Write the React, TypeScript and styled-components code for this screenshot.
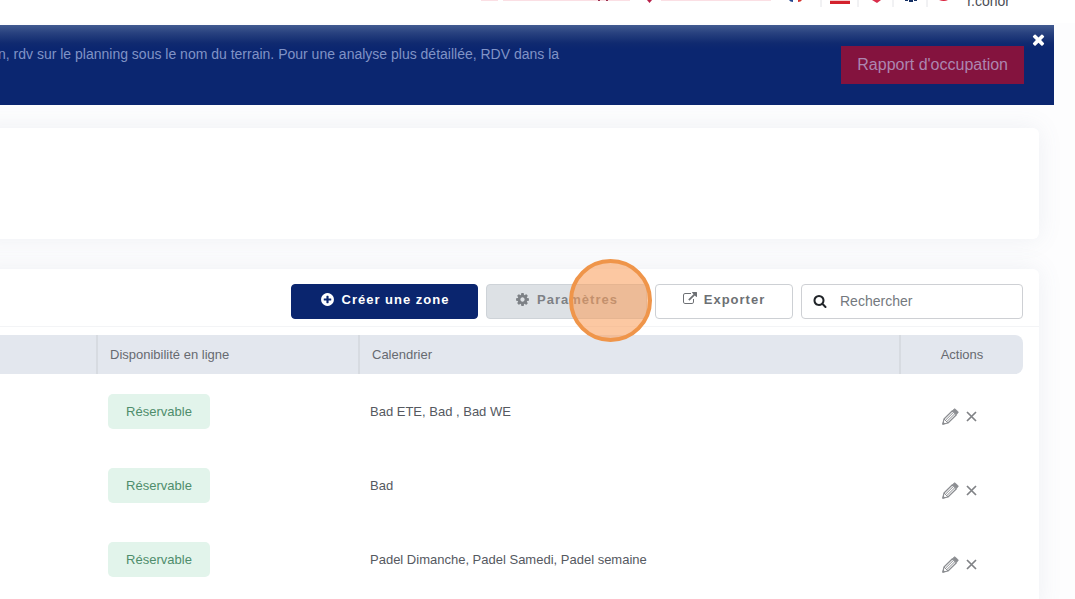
import React from "react";
import styled, { createGlobalStyle } from "styled-components";

const GlobalStyle = createGlobalStyle`
  * { box-sizing: border-box; }
  body {
    margin: 0;
    background: #fdfdfe;
    color: #55595f;
    font-family: "Liberation Sans", Arial, sans-serif;
    font-size: 13px;
    overflow: hidden;
  }
  button, input { font-family: inherit; }
`;

const TopBar = styled.header`
  display: flex;
  justify-content: flex-end;
  height: 23px;
  padding-right: 65px;
  background: #fff;
  overflow: hidden;
`;

const TopNotes = styled.div`
  display: flex;
  align-items: flex-start;
  width: 292px;
  margin-right: 16px;
`;

const TopIcons = styled.svg`
  display: block;
  width: 172px;
  height: 8px;
  margin-right: 7px;
`;

const UserName = styled.span`
  height: 16px;
  margin-top: -7px;
  color: #4a4d55;
  font-size: 14px;
  line-height: 16px;
`;

const Banner = styled.section`
  display: flex;
  align-items: flex-start;
  height: 80px;
  margin: 2px 21px 0 0;
  background: linear-gradient(#425b91 0, #28417f 8px, #102a70 18px, #0b2670 24px);
`;

const BannerText = styled.p`
  flex: 1;
  margin: 20px 0 0 -2px;
  color: #8093c6;
  font-size: 14px;
  line-height: 18px;
  white-space: nowrap;
`;

const ReportButton = styled.button`
  height: 38px;
  margin-top: 21px;
  padding: 0 16px;
  border: 0;
  background: #84133e;
  color: #ac86b0;
  font-size: 16px;
  line-height: 36px;
  white-space: nowrap;
`;

const IconButton = styled.button<{ $color: string }>`
  display: flex;
  padding: 0;
  border: 0;
  background: none;
  color: ${(p) => p.$color};
`;

const BannerClose = styled.div`
  margin: 6px 7px 0 6px;
`;

const Panel = styled.section`
  margin-right: 36px;
  margin-left: -24px;
  padding-left: 24px;
  border-radius: 6px;
  background: #fff;
  box-shadow: 0 0 24px rgba(100, 115, 150, 0.1);
`;

const EmptyPanel = styled(Panel)`
  height: 111px;
  margin-top: 23px;
`;

const ListPanel = styled(Panel)`
  min-height: 340px;
  margin-top: 30px;
`;

const Toolbar = styled.div`
  display: flex;
  justify-content: flex-end;
  gap: 8px;
  padding: 15px 16px 7px 0;
  border-bottom: 1px solid #f3f4f6;
`;

const ToolButton = styled.button<{ $kind: "primary" | "muted" | "plain"; $width: number }>`
  display: flex;
  align-items: center;
  justify-content: center;
  gap: 7px;
  width: ${(p) => p.$width}px;
  height: 35px;
  padding: 0 0 5px;
  border: 1px solid ${(p) => ({ primary: "#0a256e", muted: "#ced3d8", plain: "#cdd0d4" })[p.$kind]};
  border-radius: 4px;
  background: ${(p) => ({ primary: "#0a256e", muted: "#dde1e5", plain: "#fff" })[p.$kind]};
  color: ${(p) => ({ primary: "#fff", muted: "#7d8186", plain: "#6d7074" })[p.$kind]};
  font-size: 13px;
  font-weight: 700;
  letter-spacing: 1px;
`;

const Highlighted = styled.div`
  position: relative;
`;

const ClickMarker = styled.span`
  position: absolute;
  top: -25px;
  right: -5px;
  width: 83px;
  height: 83px;
  border: 4px solid #ef954a;
  border-radius: 50%;
  background: rgba(249, 157, 89, 0.56);
  pointer-events: none;
`;

const SearchBox = styled.label`
  display: flex;
  align-items: center;
  gap: 13px;
  width: 222px;
  height: 35px;
  padding: 0 0 2px 11px;
  border: 1px solid #ced0d4;
  border-radius: 4px;
  background: #fff;
  color: #212529;
`;

const SearchInput = styled.input`
  flex: 1;
  min-width: 0;
  padding: 0;
  border: 0;
  outline: 0;
  background: none;
  font-size: 14px;
  &::placeholder { color: #74797e; opacity: 1; }
`;

const TableArea = styled.div`
  padding: 8px 16px 0 0;
`;

const Table = styled.table`
  width: 100%;
  border-collapse: separate;
  border-spacing: 0;
  table-layout: fixed;
`;

const HeadCell = styled.th<{ $center?: boolean }>`
  height: 39px;
  padding: 0 12px;
  background: #e3e7ee;
  color: #676a70;
  font-weight: 400;
  text-align: ${(p) => (p.$center ? "center" : "left")};
  & + & { border-left: 2px solid #d7dbe1; }
  &:last-child { border-radius: 0 8px 8px 0; }
`;

const Cell = styled.td`
  height: 74px;
  padding: 0 12px;
  vertical-align: middle;
`;

const Badge = styled.span`
  display: inline-block;
  width: 102px;
  border-radius: 5px;
  background: #e2f4eb;
  color: #4e8d6b;
  line-height: 35px;
  text-align: center;
`;

const RowActions = styled.div`
  display: flex;
  align-items: center;
  justify-content: center;
  gap: 7px;
  padding: 11px 3px 0 0;
`;

const glyphs = {
  times:
    "M1490 1322q0 40-28 68l-136 136q-28 28-68 28t-68-28l-294-294-294 294q-28 28-68 28t-68-28l-136-136q-28-28-28-68t28-68l294-294-294-294q-28-28-28-68t28-68l136-136q28-28 68-28t68 28l294 294 294-294q28-28 68-28t68 28l136 136q28 28 28 68t-28 68l-294 294 294 294q28 28 28 68z",
  search:
    "M1216 832q0-185-131.500-316.500t-316.500-131.500-316.500 131.500-131.500 316.500 131.500 316.500 316.500 131.500 316.500-131.500 131.500-316.500zm512 832q0 52-38 90t-90 38q-54 0-90-38l-343-342q-179 124-399 124-143 0-273.500-55.500t-225-150-150-225-55.500-273.500 55.500-273.500 150-225 225-150 273.500-55.500 273.500 55.500 225 150 150 225 55.500 273.500q0 220-124 399l343 343q37 37 37 90z",
  cog:
    "M1152 896q0-106-75-181t-181-75-181 75-75 181 75 181 181 75 181-75 75-181zm512-109v222q0 12-8 23t-20 13l-185 28q-19 54-39 91 35 50 107 138 10 12 10 25t-9 23q-27 37-99 108t-94 71q-12 0-26-9l-138-108q-44 23-91 38-16 136-29 186-7 28-36 28h-222q-14 0-24.500-8.500t-11.500-21.500l-28-184q-49-16-90-37l-141 107q-10 9-25 9-14 0-25-11-126-114-165-168-7-10-7-23 0-12 8-23 15-21 51-66.500t54-70.500q-27-50-41-99l-183-27q-13-2-21-12.500t-8-23.500v-222q0-12 8-23t19-13l186-28q14-46 39-92-40-57-107-138-10-12-10-24 0-10 9-23 26-36 98.500-107.500t94.500-71.500q13 0 26 10l138 107q44-23 91-38 16-136 29-186 7-28 36-28h222q14 0 24.500 8.500t11.500 21.500l28 184q49 16 90 37l142-107q9-9 24-9 13 0 25 10 129 119 165 170 7 8 7 22 0 12-8 23-15 21-51 66.500t-54 70.500q26 50 41 98l183 28q13 2 21 12.500t8 23.500z",
  plus:
    "M1344 960v-128q0-26-19-45t-45-19h-256v-256q0-26-19-45t-45-19h-128q-26 0-45 19t-19 45v256h-256q-26 0-45 19t-19 45v128q0 26 19 45t45 19h256v256q0 26 19 45t45 19h128q26 0 45-19t19-45v-256h256q26 0 45-19t19-45zm320-64q0 209-103 385.500t-279.500 279.500-385.500 103-385.500-103-279.500-279.500-103-385.500 103-385.500 279.500-279.500 385.500-103 385.500 103 279.500 279.500 103 385.500z",
  external:
    "M1408 928v320q0 119-84.500 203.500t-203.500 84.500h-832q-119 0-203.500-84.500t-84.500-203.500v-832q0-119 84.500-203.500t203.500-84.500h704q14 0 23 9t9 23v64q0 14-9 23t-23 9h-704q-66 0-113 47t-47 113v832q0 66 47 113t113 47h832q66 0 113-47t47-113v-320q0-14 9-23t23-9h64q14 0 23 9t9 23zm384-864v512q0 26-19 45t-45 19-45-19l-176-176-652 652q-10 10-23 10t-23-10l-114-114q-10-10-10-23t10-23l652-652-176-176q-19-19-19-45t19-45 45-19h512q26 0 45 19t19 45z",
};

function Glyph({ name, size }: { name: keyof typeof glyphs; size: number }) {
  return (
    <svg width={size} height={size} viewBox="0 0 1792 1792" fill="currentColor" aria-hidden="true">
      <path d={glyphs[name]} />
    </svg>
  );
}

function Pencil() {
  return (
    <svg width="17" height="17" viewBox="0 0 17 17" fill="none" stroke="currentColor" strokeLinejoin="round" aria-hidden="true">
      <path d="M.8 16.200l1.200-5.200 8.400-8.200 4 4L6 15z" strokeWidth="1.200" />
      <path d="M2 11l4 4M3.400 12.300l8.200-8.100M4.800 13.600l8.200-8.100" />
      <path d="M10.800 2.400l1.200-1.200q.7-.6 1.400 0l2.400 2.400q.6.7 0 1.400l-1.200 1.200z" fill="currentColor" />
      <path d="M.8 16.200l.5-2 1.500 1.500z" fill="currentColor" />
    </svg>
  );
}

function Cross() {
  return (
    <svg width="11" height="11" viewBox="0 0 11 11" stroke="currentColor" strokeWidth="1.700" aria-hidden="true">
      <path d="M1 1l9 9M10 1l-9 9" />
    </svg>
  );
}

const zones = ["Bad ETE, Bad , Bad WE", "Bad", "Padel Dimanche, Padel Samedi, Padel semaine"];

export default function App() {
  return (
    <>
      <GlobalStyle />
      <TopBar>
        <TopNotes>
          <svg width="292" height="4" viewBox="0 0 292 4" aria-hidden="true">
            <path d="M1 0h17M23 0h127M181 0h110" stroke="#fbdfe4" strokeWidth="2" />
            <path d="M118 0h2M126 0h2" stroke="#9b3150" strokeWidth="2" />
            <path d="M167 0h5l-2.500 3z" fill="#b81f48" />
          </svg>
        </TopNotes>
        <TopIcons viewBox="0 0 172 8" aria-hidden="true">
          <path d="M1 0h4v2q-3 0-4-2z" fill="#24468f" />
          <path d="M10 0h4q-1 2-4 2z" fill="#d5342f" />
          <path d="M33 0v7M70 0v7M105 0v7M139 0v7" stroke="#e3e4e8" />
          <path d="M42 0h20v4H42z" fill="#d3222c" />
          <path d="M42 0h20v1H42z" fill="#f4c6c7" />
          <path d="M84 0h9l-4 3z" fill="#d92d4a" />
          <path d="M117 0h3v1h-3zM121 0h4v2h-4zM126 0h3v1h-3z" fill="#153064" />
          <path d="M151 0h9q-4 2-9 0z" fill="#d9203c" />
        </TopIcons>
        <UserName>r.conor</UserName>
      </TopBar>

      <Banner>
        <BannerText>
          n, rdv sur le planning sous le nom du terrain. Pour une analyse plus détaillée, RDV dans la
        </BannerText>
        <ReportButton type="button">Rapport d'occupation</ReportButton>
        <BannerClose>
          <IconButton type="button" $color="#fff" aria-label="Fermer">
            <Glyph name="times" size={17} />
          </IconButton>
        </BannerClose>
      </Banner>

      <main>
        <EmptyPanel />
        <ListPanel>
          <Toolbar>
            <ToolButton type="button" $kind="primary" $width={187}>
              <Glyph name="plus" size={15} />
              Créer une zone
            </ToolButton>
            <Highlighted>
              <ToolButton type="button" $kind="muted" $width={161}>
                <Glyph name="cog" size={15} />
                Paramètres
              </ToolButton>
              <ClickMarker />
            </Highlighted>
            <ToolButton type="button" $kind="plain" $width={138}>
              <Glyph name="external" size={14} />
              Exporter
            </ToolButton>
            <SearchBox>
              <Glyph name="search" size={14} />
              <SearchInput type="text" placeholder="Rechercher" aria-label="Rechercher" />
            </SearchBox>
          </Toolbar>

          <TableArea>
            <Table>
              <colgroup>
                <col style={{ width: 96 }} />
                <col style={{ width: 262 }} />
                <col />
                <col style={{ width: 124 }} />
              </colgroup>
              <thead>
                <tr>
                  <HeadCell aria-label="Zone" />
                  <HeadCell>Disponibilité en ligne</HeadCell>
                  <HeadCell>Calendrier</HeadCell>
                  <HeadCell $center>Actions</HeadCell>
                </tr>
              </thead>
              <tbody>
                {zones.map((calendar) => (
                  <tr key={calendar}>
                    <Cell />
                    <Cell>
                      <Badge>Réservable</Badge>
                    </Cell>
                    <Cell>{calendar}</Cell>
                    <Cell>
                      <RowActions>
                        <IconButton type="button" $color="#8b8d91" aria-label="Modifier">
                          <Pencil />
                        </IconButton>
                        <IconButton type="button" $color="#808286" aria-label="Supprimer">
                          <Cross />
                        </IconButton>
                      </RowActions>
                    </Cell>
                  </tr>
                ))}
              </tbody>
            </Table>
          </TableArea>
        </ListPanel>
      </main>
    </>
  );
}
